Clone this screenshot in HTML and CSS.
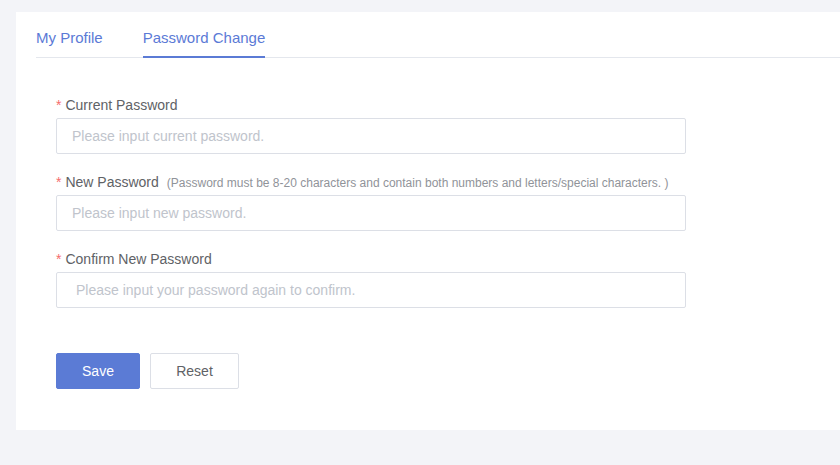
FILE: index.html
```html
<!DOCTYPE html>
<html lang="en">
<head>
<meta charset="utf-8">
<title>Password Change</title>
<link rel="stylesheet" href="styles.css">
</head>
<body>
<div class="page">
  <div class="card">
    <div class="tabs">
      <div class="tab">My Profile</div>
      <div class="tab active">Password Change</div>
    </div>
    <form class="form">
      <div class="item">
        <label class="label"><span class="req">*</span>Current Password</label>
        <input class="input" type="password" placeholder="Please input current password.">
      </div>
      <div class="item">
        <label class="label"><span class="req">*</span>New Password<span class="hint">(Password must be 8-20 characters and contain both numbers and letters/special characters. )</span></label>
        <input class="input" type="password" placeholder="Please input new password.">
      </div>
      <div class="item">
        <label class="label"><span class="req">*</span>Confirm New Password</label>
        <input class="input input-wide" type="password" placeholder="Please input your password again to confirm.">
      </div>
      <div class="actions">
        <button type="button" class="btn btn-primary">Save</button>
        <button type="button" class="btn">Reset</button>
      </div>
    </form>
  </div>
</div>
</body>
</html>
```
FILE: styles.css
```css
* { box-sizing: border-box; }
html, body { margin: 0; padding: 0; }
body {
  background: #f3f4f8;
  font-family: "Liberation Sans", Arial, sans-serif;
  width: 840px;
  height: 465px;
  overflow: hidden;
}
.page { padding: 12px 0 0 16px; }
.card {
  background: #fff;
  height: 418px;
  padding: 6px 0 0 20px;
}
.tabs {
  display: flex;
  height: 40px;
  border-bottom: 1px solid #e4e7ed;
}
.tab {
  font-size: 15px;
  line-height: 40px;
  color: #5b7ad6;
  padding: 0 20px;
  position: relative;
}
.tab:first-child { padding-left: 0; }
.tab:last-child { padding-right: 0; }
.tab.active::after {
  content: "";
  position: absolute;
  left: 20px;
  right: 0;
  bottom: -1px;
  height: 2px;
  background: #5b7bd5;
}
.form {
  padding: 37px 0 0 20px;
  width: 650px;
}
.item { margin-bottom: 18px; }
.label {
  display: block;
  height: 20px;
  font-size: 14px;
  line-height: 20px;
  color: #606266;
  margin-bottom: 3px;
  white-space: nowrap;
}
.req { color: #f56c6c; margin-right: 4px; }
.hint {
  font-size: 12px;
  line-height: 1;
  color: #909399;
  margin-left: 8px;
}
.input {
  display: block;
  width: 630px;
  height: 36px;
  border: 1px solid #dcdfe6;
  border-radius: 2px;
  padding: 0 15px;
  font-family: inherit;
  font-size: 14px;
  color: #606266;
  outline: none;
  background: #fff;
}
.input-wide { padding-left: 19px; }
.input::placeholder { color: #c0c4cc; }
.actions {
  display: flex;
  gap: 10px;
  padding-top: 27px;
}
.btn {
  height: 36px;
  width: 89px;
  border: 1px solid #dcdfe6;
  background: #fff;
  color: #606266;
  font-family: inherit;
  font-size: 14px;
  border-radius: 2px;
  padding: 0;
}
.btn-primary {
  width: 84px;
  background: #5b7bd5;
  border-color: #5b7bd5;
  color: #fff;
}
```
